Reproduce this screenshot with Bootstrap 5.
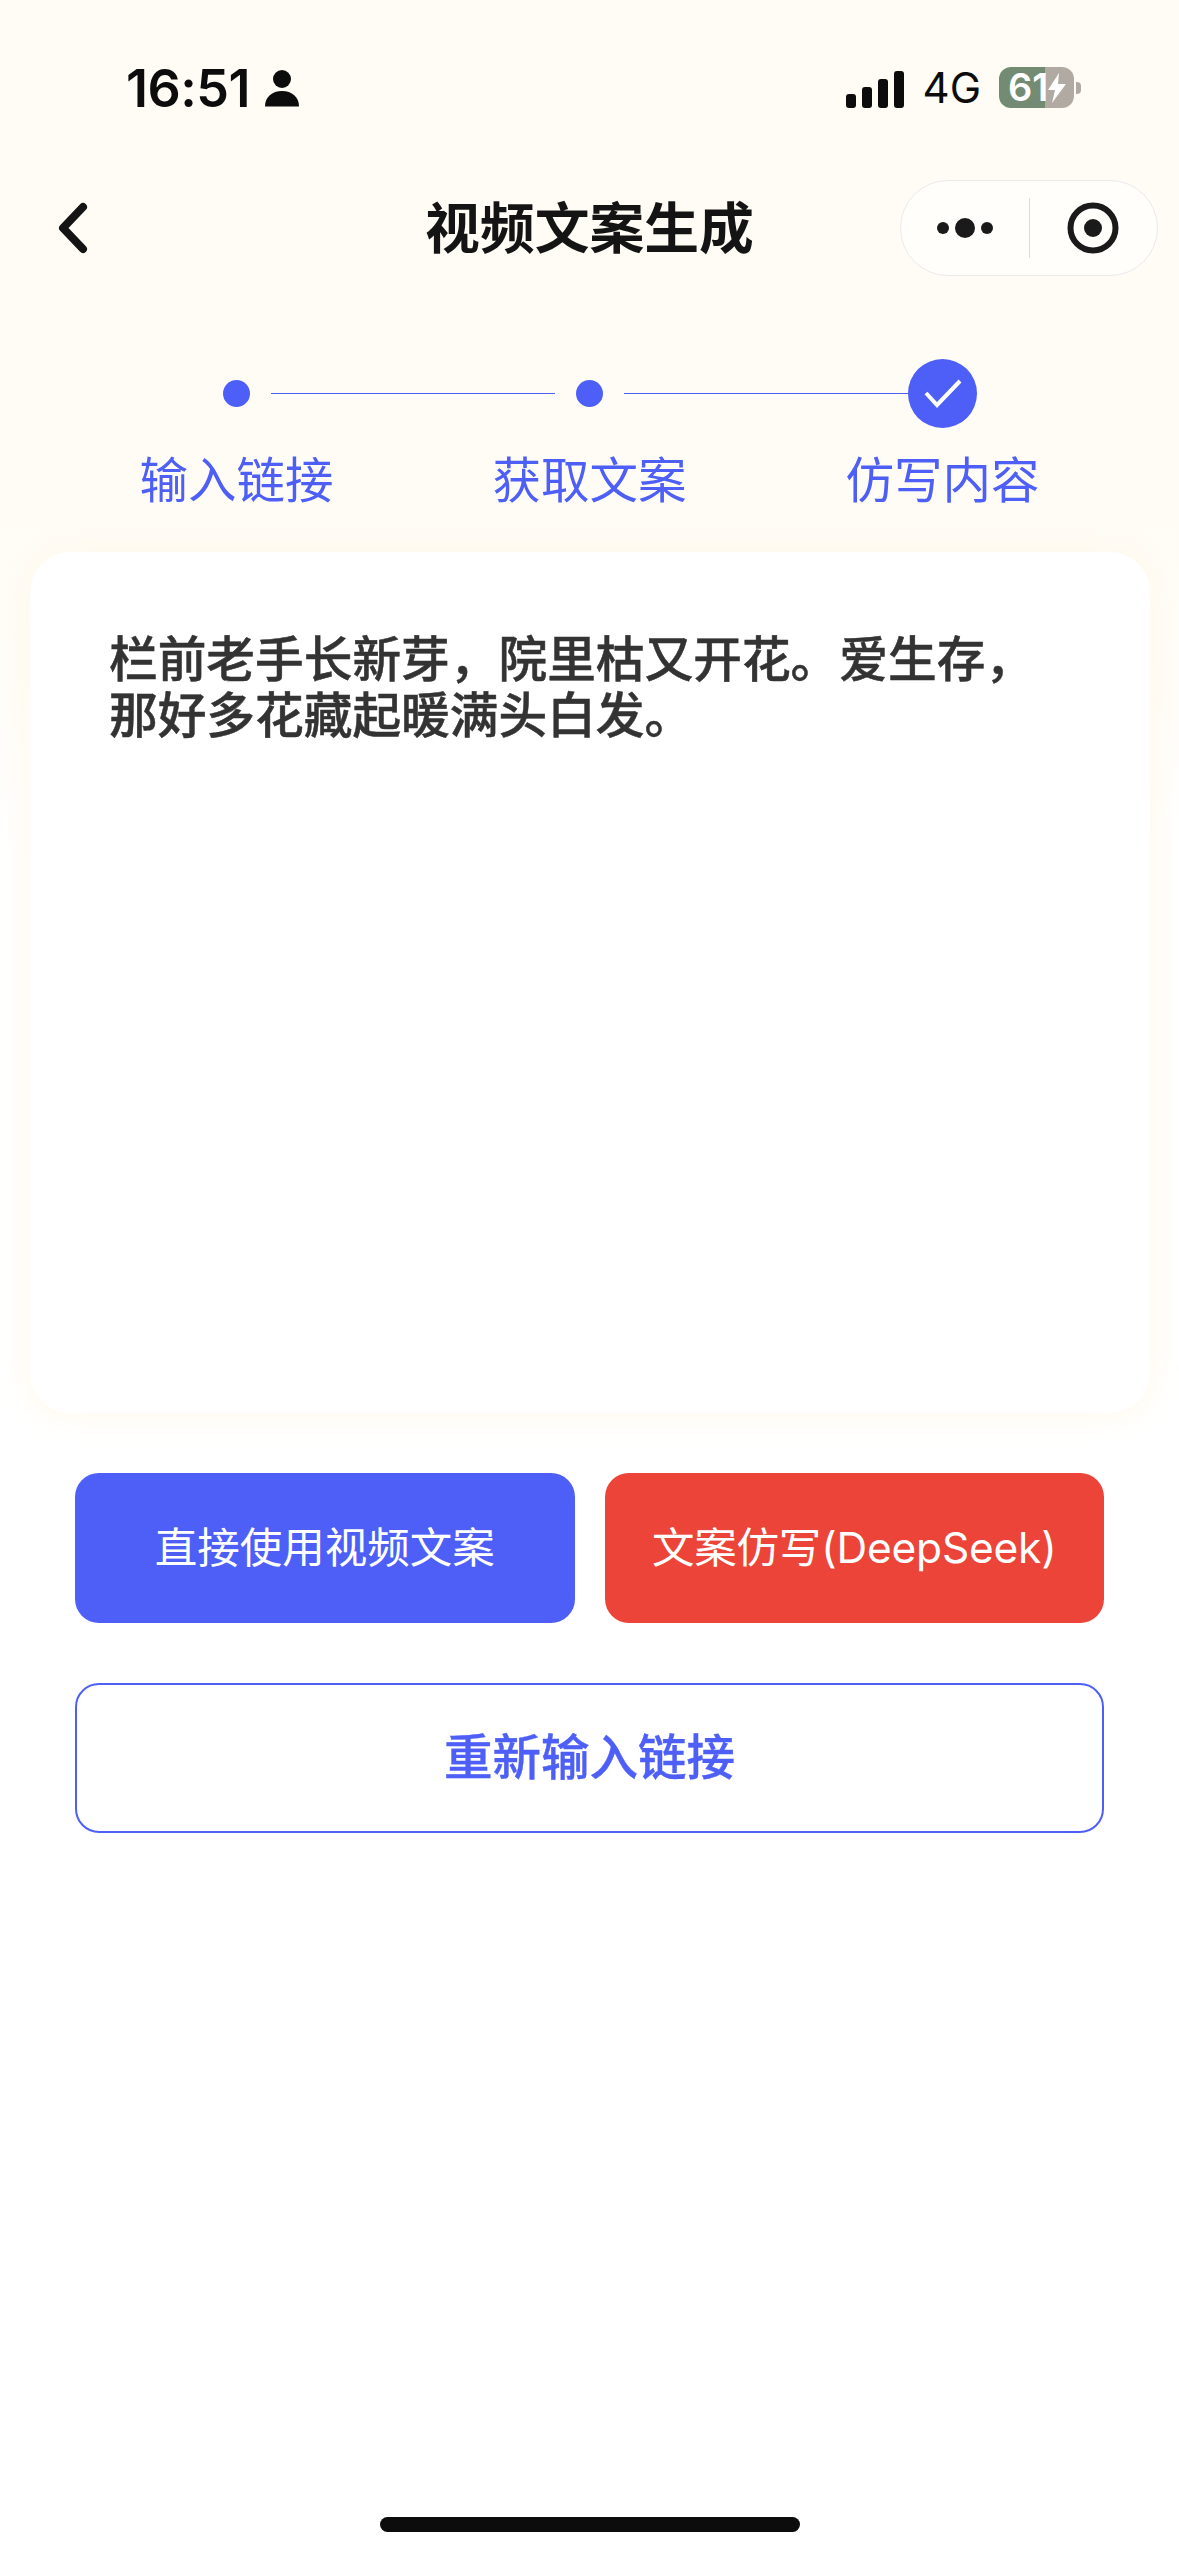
<!doctype html>
<html lang="zh-CN">
<head>
<meta charset="utf-8">
<title>视频文案生成</title>
<link href="https://cdn.jsdelivr.net/npm/bootstrap@5.3.0/dist/css/bootstrap.min.css" rel="stylesheet">
<style>
:root{--ink:#0c0c0c;--brand:#4d5ff7;--alert:#ec4439}
html,body{margin:0;background:#fff}
body{width:1179px;min-height:2556px;font-family:Inter,"Noto Sans CJK SC",sans-serif;color:var(--ink);
  background:linear-gradient(#fffcf6 0,#fffcf6 520px,#fffdf9 700px,#fff 860px) no-repeat;}
.status-row{height:180px;padding:67px 98px 0 126px;align-items:flex-start}
.clock{font-size:52px;font-weight:600;line-height:44px;letter-spacing:-.5px}
.person-ico{margin:3px 0 0 15px}
.signal-ico{margin-top:3px}
.net{font-size:42px;line-height:41px;font-weight:400;margin:0 18px 0 19px}
.batt{width:75px;height:41px;border-radius:12px;background:linear-gradient(90deg,#738b73 0,#738b73 46px,#b1aaa3 46px);color:#fff;
  font-size:38px;font-weight:600;line-height:41px;padding-left:9px}
.batt-nub{width:5px;height:12px;background:#b1aaa3;border-radius:0 4px 4px 0;margin-left:2px}
.top-nav{display:grid;grid-template-columns:minmax(0,1fr) auto minmax(0,1fr);height:96px;padding:0 21px}
.back-ico{margin-left:35px}
.page-title{font-size:54.800px;font-weight:700;margin:0;line-height:96px;color:#141414}
.capsule{width:258px;height:96px;border:1px solid #ebe9ec;border-radius:48px;background:rgba(255,255,255,.55)}
.capsule-sep{width:1px;height:60px;background:#dcdbe0}
.capsule-part{width:128px}
.track{margin-top:83px;padding-left:223px;height:69px}
.step-dot{width:27px;height:27px;border-radius:50%;background:var(--brand);flex:none}
.step-line{width:284px;height:1.5px;background:var(--brand);flex:none}
.step-gap{margin:0 21px}
.step-gap-end{margin-left:21px}
.step-check{width:69px;height:69px;border-radius:50%;background:var(--brand);flex:none}
.step-labels{display:grid;grid-template-columns:repeat(3,353px);padding-left:60px;margin-top:23px}
.step-label{font-size:48.500px;line-height:60px;color:var(--brand);text-align:center;font-weight:400}
.copy-card{margin:41px 29px 0 30px;height:861px;border:0;border-radius:40px;background:#fff;box-shadow:0 0 26px 8px rgba(255,248,232,.6);padding:80px 100px 0 79px}
.copy-text{font-size:48.700px;line-height:56px;font-weight:500;-webkit-text-stroke:.5px #333;color:#333;margin:0}
.actions{margin:60px 75px 0}
.act-btn{height:150px;border-radius:24px;font-size:42.500px;line-height:150px;padding:0;border:0;color:#fff}
.act-blue,.act-blue:hover{background:var(--brand);color:#fff}
.act-red,.act-red:hover{background:var(--alert);color:#fff;letter-spacing:-.2px}
.act-line,.act-line:hover{width:100%;height:150px;border:2px solid var(--brand);background:#fff;color:var(--brand);font-size:48.500px;font-weight:500;-webkit-text-stroke:.4px var(--brand);line-height:146px;border-radius:24px;padding:0;margin-top:60px}
.home-bar{width:420px;height:15px;background:var(--ink);border-radius:8px;margin-bottom:24px}
</style>
</head>
<body class="d-flex flex-column">
<header class="status-row d-flex justify-content-between">
  <div class="d-flex align-items-start">
    <span class="clock">16:51</span>
    <svg class="person-ico" width="34" height="37" viewBox="0 0 34 37"><circle cx="17" cy="9" r="9" fill="#0c0c0c"/><path d="M0 36.500C0 27 7 21 17 21s17 6 17 15.500z" fill="#0c0c0c"/></svg>
  </div>
  <div class="d-flex align-items-center" style="height:41px">
    <svg class="signal-ico" width="58" height="37" viewBox="0 0 58 37"><g fill="#0c0c0c"><rect x="0" y="23" width="10" height="14" rx="3"/><rect x="16" y="16" width="10" height="21" rx="3"/><rect x="32" y="8" width="10" height="29" rx="3"/><rect x="48" y="0" width="10" height="37" rx="3"/></g></svg>
    <span class="net">4G</span>
    <div class="batt d-flex align-items-center">61<svg width="18" height="30" viewBox="0 0 18 30"><path d="M11 0 0 17h7l-3 13L18 11h-8z" fill="#fff"/></svg></div>
    <span class="batt-nub"></span>
  </div>
</header>
<nav class="top-nav align-items-center">
  <div class="back-ico"><svg width="34" height="52" viewBox="0 0 34 52"><path d="M27 5 7 26l20 21" fill="none" stroke="#141414" stroke-width="8" stroke-linecap="round" stroke-linejoin="round"/></svg></div>
  <h1 class="page-title">视频文案生成</h1>
  <div class="capsule d-flex align-items-center ms-auto">
    <div class="capsule-part d-flex justify-content-center">
      <svg width="58" height="22" viewBox="0 0 58 22"><g fill="#1a1a1a"><circle cx="7" cy="11" r="6"/><circle cx="29" cy="11" r="10"/><circle cx="51" cy="11" r="6"/></g></svg>
    </div>
    <span class="capsule-sep"></span>
    <div class="capsule-part d-flex justify-content-center">
      <svg width="52" height="52" viewBox="0 0 52 52"><circle cx="26" cy="26" r="22.500" fill="none" stroke="#1a1a1a" stroke-width="6"/><circle cx="26" cy="26" r="9" fill="#1a1a1a"/></svg>
    </div>
  </div>
</nav>
<section>
  <div class="track d-flex align-items-center">
    <span class="step-dot"></span><span class="step-line step-gap"></span>
    <span class="step-dot"></span><span class="step-line step-gap-end"></span>
    <span class="step-check d-flex align-items-center justify-content-center">
      <svg width="38" height="29" viewBox="0 0 38 29"><path d="M2 14l11 12L36 2" fill="none" stroke="#fff" stroke-width="4"/></svg>
    </span>
  </div>
  <div class="step-labels">
    <div class="step-label">输入链接</div>
    <div class="step-label">获取文案</div>
    <div class="step-label">仿写内容</div>
  </div>
</section>
<main class="card copy-card">
  <p class="copy-text">栏前老手长新芽，院里枯又开花。爱生存，那好多花藏起暖满头白发。</p>
</main>
<section class="actions">
  <div class="d-flex" style="gap:30px">
    <button type="button" class="btn act-btn act-blue flex-fill w-50">直接使用视频文案</button>
    <button type="button" class="btn act-btn act-red flex-fill w-50">文案仿写(DeepSeek)</button>
  </div>
  <button type="button" class="btn act-line">重新输入链接</button>
</section>
<div class="home-bar mt-auto mx-auto"></div>
<script src="https://cdn.jsdelivr.net/npm/bootstrap@5.3.0/dist/js/bootstrap.bundle.min.js"></script>
</body>
</html>
